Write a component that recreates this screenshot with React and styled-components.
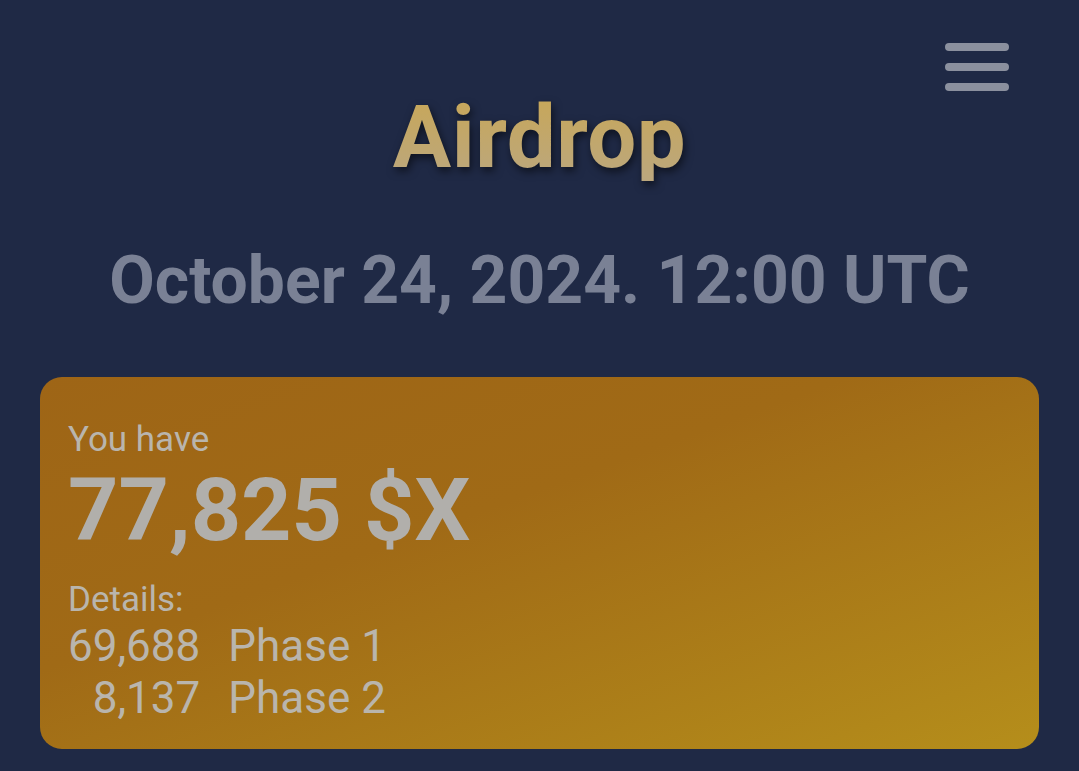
import React from "react";
import styled, { createGlobalStyle } from "styled-components";

const Global = createGlobalStyle`
  html, body { margin: 0; padding: 0; background: #1f2945; }
  body { font-family: Roboto, "Noto Sans", sans-serif; }
`;

const Page = styled.div`
  width: 1079px;
  height: 771px;
  background: #1f2945;
  box-sizing: border-box;
  padding: 0 40px;
  display: flex;
  flex-direction: column;
  position: relative;
  overflow: hidden;
`;

const Header = styled.header`
  padding-top: 94px;
  display: flex;
  justify-content: center;
`;

const Title = styled.h1`
  margin: 0;
  font-size: 87px;
  font-weight: 700;
  line-height: 1;
  letter-spacing: 0.5px;
  background: linear-gradient(180deg, #c8a758 0%, #bba77e 100%);
  -webkit-background-clip: text;
  background-clip: text;
  color: transparent;
  filter: drop-shadow(2px 4px 4px rgba(0, 0, 0, 0.55));
`;

const Menu = styled.button`
  position: absolute;
  top: 43px;
  right: 70px;
  width: 64px;
  height: 48px;
  padding: 0;
  border: 0;
  background: transparent;
  display: flex;
  flex-direction: column;
  justify-content: space-between;
`;

const Bar = styled.span`
  display: block;
  height: 8px;
  border-radius: 4px;
  background: #8b909e;
`;

const DateLine = styled.div`
  text-align: center;
  font-size: 66px;
  font-weight: 700;
  color: #7a8195;
  line-height: 1;
  margin-top: 67px;
`;

const Card = styled.section`
  margin-top: 63px;
  height: 372px;
  border-radius: 22px;
  background: linear-gradient(160deg, #9e6516 0%, #a06a16 40%, #b58e1b 100%);
  padding: 43px 28px 0;
  box-sizing: border-box;
  color: #b9b5ad;
`;

const Label = styled.div`
  font-size: 35px;
  line-height: 40px;
  font-weight: 400;
`;

const Amount = styled.div`
  font-size: 88px;
  font-weight: 700;
  line-height: 1;
  color: #b1afab;
  margin-top: 6px;
`;

const Details = styled.div`
  margin-top: 26px;
`;

const Rows = styled.div`
  display: grid;
  grid-template-columns: max-content max-content;
  column-gap: 28px;
`;

const Num = styled.span`
  font-size: 44px;
  line-height: 52px;
  text-align: right;
`;

const Phase = styled.span`
  font-size: 44px;
  line-height: 52px;
`;

const rows = [
  ["69,688", "Phase 1"],
  ["8,137", "Phase 2"],
];

export default function App() {
  return (
    <>
      <Global />
      <Page>
        <Header>
          <Title>Airdrop</Title>
        </Header>
        <Menu aria-label="menu">
          <Bar />
          <Bar />
          <Bar />
        </Menu>
        <DateLine>October 24, 2024. 12:00 UTC</DateLine>
        <Card>
          <Label>You have</Label>
          <Amount>77,825 $X</Amount>
          <Details>
            <Label>Details:</Label>
            <Rows>
              {rows.map(([n, p]) => (
                <React.Fragment key={p}>
                  <Num>{n}</Num>
                  <Phase>{p}</Phase>
                </React.Fragment>
              ))}
            </Rows>
          </Details>
        </Card>
      </Page>
    </>
  );
}
